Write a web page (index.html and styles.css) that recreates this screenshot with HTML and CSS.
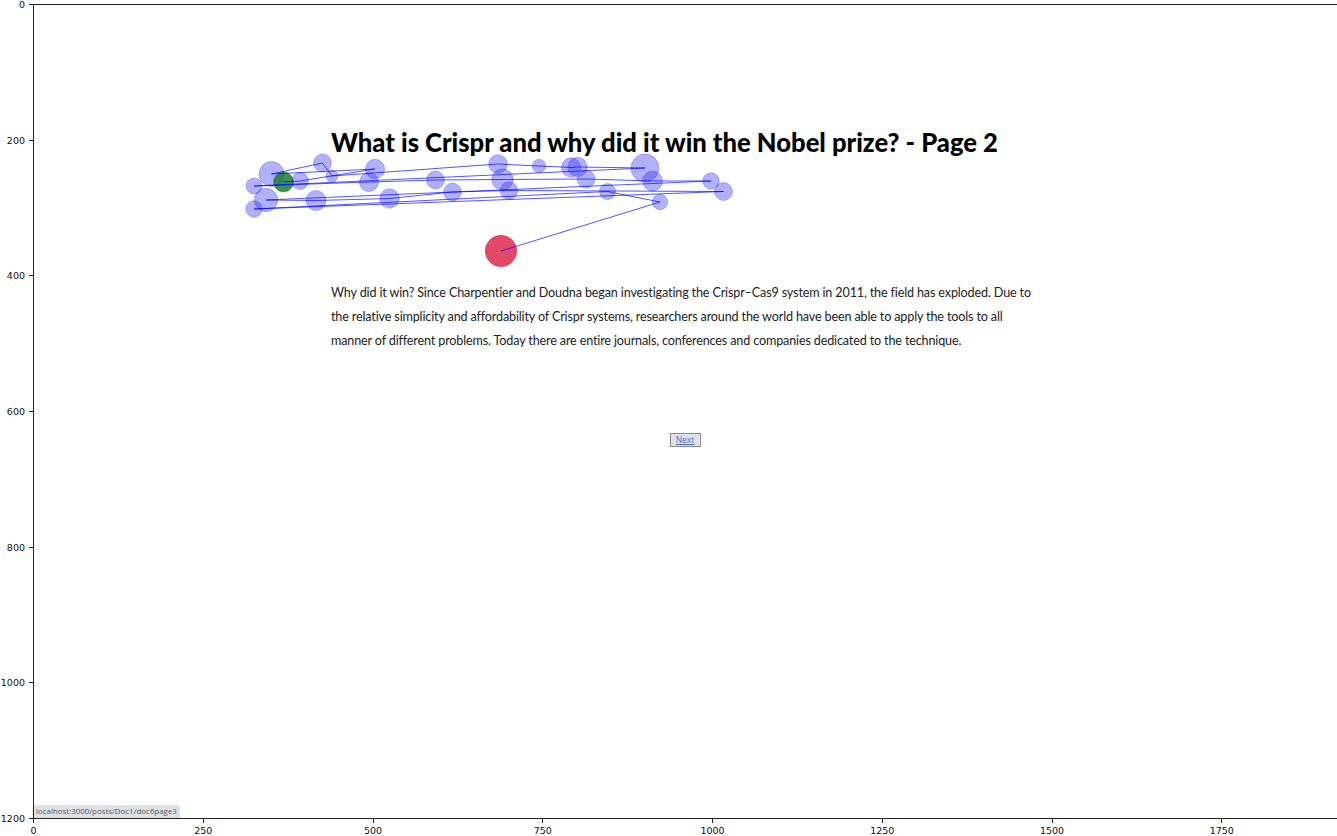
FILE: index.html
```html
<!DOCTYPE html>
<html>
<head>
<meta charset="utf-8">
<title>Scanpath</title>
<link rel="stylesheet" href="styles.css">
</head>
<body>
<div class="figure">
  <div class="yaxis">
    <div class="ytick"><span>0</span><i></i></div>
    <div class="ytick"><span>200</span><i></i></div>
    <div class="ytick"><span>400</span><i></i></div>
    <div class="ytick"><span>600</span><i></i></div>
    <div class="ytick"><span>800</span><i></i></div>
    <div class="ytick"><span>1000</span><i></i></div>
    <div class="ytick"><span>1200</span><i></i></div>
  </div>
  <div class="axes">
    <div class="page">
      <h1 class="title">What is Crispr and why did it win the Nobel prize? - Page 2</h1>
      <p class="body-text">Why did it win? Since Charpentier and Doudna began investigating the Crispr–Cas9 system in 2011, the field has exploded. Due to<br>the relative simplicity and affordability of Crispr systems, researchers around the world have been able to apply the tools to all<br>manner of different problems. Today there are entire journals, conferences and companies dedicated to the technique.</p>
      <div class="nav"><span class="next-btn"><a class="next-link">Next</a></span></div>
    </div>
    <div class="status">localhost:3000/posts/Doc1/doc6page3</div>
    <svg class="scan" viewBox="34 5 1303 813" width="1303" height="813">
      <g class="fix">
        <circle cx="300" cy="181" r="8.5"/>
        <circle cx="375" cy="169" r="9.7"/>
        <circle cx="271.5" cy="174" r="12.5"/>
        <circle cx="322.5" cy="163" r="9"/>
        <circle cx="332" cy="176" r="6"/>
        <circle cx="498" cy="164" r="9.3"/>
        <circle cx="539" cy="166" r="6.7"/>
        <circle cx="571" cy="167.5" r="9.7"/>
        <circle cx="577.5" cy="167" r="9.7"/>
        <circle cx="645" cy="168" r="14"/>
        <circle cx="254" cy="186" r="8"/>
        <circle cx="369" cy="182" r="9.5"/>
        <circle cx="435.5" cy="180" r="9"/>
        <circle cx="502.5" cy="179.5" r="10.7"/>
        <circle cx="586" cy="179" r="9"/>
        <circle cx="652.5" cy="181" r="10"/>
        <circle cx="711" cy="181" r="8.3"/>
        <circle cx="266" cy="200" r="11.7"/>
        <circle cx="316" cy="200.5" r="10"/>
        <circle cx="389.5" cy="198.5" r="9.7"/>
        <circle cx="452.5" cy="192" r="9"/>
        <circle cx="509" cy="190.5" r="8.7"/>
        <circle cx="723.5" cy="191.5" r="9"/>
        <circle cx="254" cy="209" r="8.3"/>
        <circle cx="607.5" cy="191.5" r="8"/>
        <circle cx="660" cy="202" r="7.7"/>
      </g>
      <circle class="start" cx="283.5" cy="182" r="10"/>
      <circle class="end" cx="501" cy="251" r="15.7"/>
      <polyline class="path" points="283.5,182 300,181 375,169 271.5,174 322.5,163 332,176 498,164 539,166 571,167.5 577.5,167 645,168 254,186 369,182 435.5,180 502.5,179.5 586,179 652.5,181 711,181 266,200 316,200.5 389.5,198.5 452.5,192 509,190.5 723.5,191.5 254,209 607.5,191.5 660,202 501,251"/>
    </svg>
  </div>
  <div class="corner"></div>
  <div class="xaxis">
    <div class="xtick"><i></i><span>0</span></div>
    <div class="xtick"><i></i><span>250</span></div>
    <div class="xtick"><i></i><span>500</span></div>
    <div class="xtick"><i></i><span>750</span></div>
    <div class="xtick"><i></i><span>1000</span></div>
    <div class="xtick"><i></i><span>1250</span></div>
    <div class="xtick"><i></i><span>1500</span></div>
    <div class="xtick"><i></i><span>1750</span></div>
  </div>
</div>
</body>
</html>
```
FILE: styles.css
```css
html, body {
  margin: 0;
  padding: 0;
  background: #fff;
}
body {
  width: 1337px;
  height: 836px;
  overflow: hidden;
}
.figure {
  display: grid;
  grid-template-columns: 33px 1304px;
  grid-template-rows: 815px 17px;
  padding-top: 4px;
  font-family: "DejaVu Sans", sans-serif;
}
.yaxis {
  display: flex;
  flex-direction: column;
  justify-content: space-between;
  padding: 0.5px 0;
  box-sizing: border-box;
}
.ytick {
  height: 0;
  display: flex;
  justify-content: flex-end;
  align-items: center;
}
.ytick span {
  font-size: 9.5px;
  color: #111;
  margin-right: 4px;
  white-space: nowrap;
}
.ytick i {
  display: block;
  width: 4px;
  height: 1px;
  background: #222;
}
.axes {
  position: relative;
  border-top: 1px solid #222;
  border-left: 1px solid #222;
  border-bottom: 1px solid #222;
  overflow: hidden;
}
.page {
  padding-left: 297px;
  padding-top: 120px;
}
.title {
  margin: 0;
  font-family: "Lato", sans-serif;
  font-weight: 900;
  font-size: 25.6px;
  line-height: 34px;
  color: #000;
  white-space: nowrap;
}
.body-text {
  margin: 122px 0 0;
  font-family: "Lato", sans-serif;
  font-size: 12.6px;
  letter-spacing: -0.15px;
  line-height: 24px;
  color: #222;
  white-space: nowrap;
}
.nav {
  margin-top: 80px;
  width: 708px;
  display: flex;
  justify-content: center;
}
.next-btn {
  display: inline-block;
  width: 29px;
  height: 12px;
  border: 1px solid #8a8a8a;
  background: #e2e2e2;
  text-align: center;
}
.next-link {
  font-family: "Open Sans", sans-serif;
  font-size: 8.5px;
  line-height: 12px;
  color: #4b6fd6;
  text-decoration: underline;
  display: block;
}
.status {
  position: absolute;
  left: 0;
  bottom: 0;
  height: 13px;
  padding: 0 3px 0 2px;
  background: #dee1e6;
  border-top-right-radius: 3px;
  font-family: "Open Sans", sans-serif;
  font-size: 7.9px;
  line-height: 13px;
  color: #5a5a5a;
}
.scan {
  position: absolute;
  left: 0;
  top: 0;
}
.fix circle {
  fill: rgba(40, 40, 240, 0.36);
  stroke: rgba(40, 40, 240, 0.28);
  stroke-width: 1;
}
.start {
  fill: rgba(20, 120, 50, 0.82);
  stroke: rgba(20, 120, 50, 0.5);
}
.end {
  fill: rgba(220, 20, 60, 0.78);
  stroke: rgba(220, 20, 60, 0.5);
}
.path {
  fill: none;
  stroke: rgba(0, 0, 255, 0.75);
  stroke-width: 0.9;
}
.xaxis {
  display: flex;
  gap: 169.75px;
  padding-left: 0.5px;
}
.xtick {
  width: 0;
  display: flex;
  flex-direction: column;
  align-items: center;
}
.xtick i {
  display: block;
  width: 1px;
  height: 4px;
  background: #222;
}
.xtick span {
  font-size: 9.5px;
  color: #111;
  margin-top: 2px;
  white-space: nowrap;
  line-height: 11px;
}
```
